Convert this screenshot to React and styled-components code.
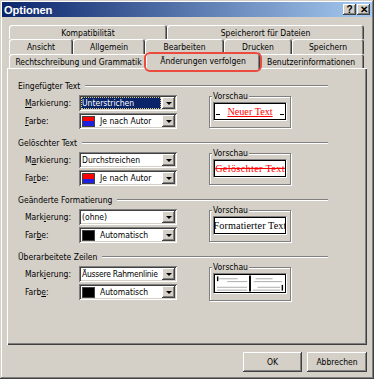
import React from "react";
import styled, { createGlobalStyle } from "styled-components";

const GlobalStyle = createGlobalStyle`
  html, body {
    margin: 0;
    padding: 0;
    background: #d4d0c8;
  }
  * {
    box-sizing: border-box;
  }
`;

const UI_FONT = `"DejaVu Sans Condensed", "Liberation Sans", Arial, sans-serif`;
const SERIF = `"Liberation Serif", "Times New Roman", serif`;

const Window = styled.div`
  width: 374px;
  height: 379px;
  padding: 2px;
  background: #d4d0c8;
  display: flex;
  flex-direction: column;
  font-family: ${UI_FONT};
  font-size: 8.5px;
  color: #000;
  box-shadow: inset -1px -1px #404040, inset 1px 1px #d4d0c8,
    inset -2px -2px #808080, inset 2px 2px #fff;
`;

const TitleBar = styled.div`
  height: 15px;
  display: flex;
  align-items: center;
  background: linear-gradient(to right, #0a246a, #a6caf0);
  padding: 0 2px 0 2px;
`;

const TitleText = styled.div`
  flex: 1;
  color: #fff;
  font-family: "Liberation Sans", Arial, sans-serif;
  font-weight: bold;
  font-size: 11.2px;
  letter-spacing: -0.1px;
`;

const TitleButton = styled.div`
  width: 13px;
  height: 11px;
  margin-left: 1px;
  background: #d4d0c8;
  display: flex;
  align-items: center;
  justify-content: center;
  font-family: "Liberation Sans", Arial, sans-serif;
  font-weight: bold;
  font-size: 10px;
  line-height: 1;
  box-shadow: inset -1px -1px #404040, inset 1px 1px #fff,
    inset -2px -2px #808080;
`;

const Content = styled.div`
  display: flex;
  flex-direction: column;
  padding: 8px 3px 0 5px;
`;

const TabRow = styled.div`
  display: flex;
  padding-left: 2px;
  height: ${(p) => p.h}px;
`;

const Tab = styled.div`
  position: relative;
  width: ${(p) => p.w}px;
  display: flex;
  align-items: center;
  justify-content: center;
  padding-top: 1px;
  background: #d4d0c8;
  border-radius: 3px 3px 0 0;
  box-shadow: inset 1px 1px #fff, inset -1px 0 #404040, inset -2px 0 #808080;
  white-space: nowrap;
`;

const ActiveTab = styled(Tab)`
  width: ${(p) => p.w + 4}px;
  margin: -2px -2px -1px -2px;
  padding-top: 0;
  z-index: 2;
`;

const Highlight = styled.div`
  position: absolute;
  left: -2px;
  right: -2px;
  top: 0px;
  bottom: -3px;
  border: 2px solid #ec4a3e;
  border-radius: 6px;
`;

const Panel = styled.div`
  position: relative;
  z-index: 1;
  height: 277px;
  width: 360px;
  padding: 11px 0 0 11px;
  background: #d4d0c8;
  box-shadow: inset 1px 1px #fff, inset -1px -1px #404040,
    inset -2px -2px #808080;
`;

const Section = styled.div`
  width: 310px;
  height: 57px;
`;

const SectionHeader = styled.div`
  height: 14px;
  display: flex;
  align-items: center;
`;

const SectionLine = styled.div`
  flex: 1;
  margin-left: 5px;
  height: 2px;
  border-top: 1px solid #808080;
  border-bottom: 1px solid #fff;
`;

const SectionBody = styled.div`
  display: flex;
  margin-top: 2px;
  padding-left: 7px;
`;

const Fields = styled.div`
  display: flex;
  flex-direction: column;
  gap: 2px;
`;

const FieldRow = styled.div`
  display: flex;
  align-items: center;
  height: 16px;
`;

const FieldLabel = styled.div`
  width: 54px;
`;

const Key = styled.span`
  text-decoration: underline;
`;

const Combo = styled.div`
  width: 98px;
  height: 16px;
  padding: 2px;
  display: flex;
  background: #fff;
  box-shadow: inset 1px 1px #808080, inset -1px -1px #fff,
    inset 2px 2px #404040, inset -2px -2px #d4d0c8;
`;

const ComboValue = styled.div`
  flex: 1;
  display: flex;
  align-items: center;
  padding-left: 1px;
  margin-right: 1px;
  white-space: nowrap;
  overflow: hidden;
  letter-spacing: ${(p) => p.ls || 0}px;
  background: ${(p) => (p.selected ? "#0a246a" : "transparent")};
  color: ${(p) => (p.selected ? "#fff" : "#000")};
  outline: ${(p) => (p.selected ? "1px dotted #d8c878" : "none")};
  outline-offset: -1px;
`;

const Swatch = styled.div`
  width: 13px;
  height: 11px;
  flex: none;
  margin-right: 5px;
  border: 1px solid #404040;
  background: ${(p) => p.bg};
`;

const ArrowButton = styled.div`
  width: 13px;
  height: 12px;
  flex: none;
  display: flex;
  align-items: center;
  justify-content: center;
  background: #d4d0c8;
  box-shadow: inset -1px -1px #404040, inset 1px 1px #fff,
    inset -2px -2px #808080;
  &::after {
    content: "";
    border-left: 3px solid transparent;
    border-right: 3px solid transparent;
    border-top: 3px solid #000;
    margin-top: 1px;
  }
`;

const PreviewGroup = styled.div`
  position: relative;
  width: 82px;
  height: ${(p) => p.h}px;
  margin: 1px 0 0 32px;
  padding: 5px 3px 6px 3px;
  display: flex;
  border: 1px solid #808080;
  box-shadow: inset 1px 1px #fff, 1px 1px #fff;
`;

const GroupLabel = styled.div`
  position: absolute;
  left: 2px;
  top: -6px;
  padding: 0 1px;
  line-height: 10px;
  background: #d4d0c8;
`;

const PreviewBox = styled.div`
  flex: 1;
  display: flex;
  align-items: center;
  justify-content: center;
  background: #fff;
  border: 1px solid;
  border-color: #808080 #fff #fff #808080;
  box-shadow: inset 0 0 0 1px #000;
  padding: 0 2px;
  font-family: ${SERIF};
  font-size: 10.2px;
  white-space: nowrap;
  overflow: hidden;
`;

const Blank = styled.span`
  display: inline-block;
  width: 4px;
  height: 1px;
  background: #000;
  margin: 5px 0 0;
  align-self: center;
`;

const PreviewText = styled.span`
  flex: 1;
  text-align: center;
  color: ${(p) => p.color};
  text-decoration: ${(p) => p.deco};
  text-decoration-color: ${(p) => p.color};
  letter-spacing: ${(p) => p.ls || 0}px;
`;

const ButtonBar = styled.div`
  display: flex;
  justify-content: flex-end;
  gap: 5px;
  margin-top: 7px;
  padding-right: 2px;
`;

const Button = styled.div`
  width: ${(p) => p.w}px;
  height: 20px;
  display: flex;
  align-items: center;
  justify-content: center;
  background: #d4d0c8;
  box-shadow: inset -1px -1px #404040, inset 1px 1px #fff,
    inset -2px -2px #808080;
`;

const ColumnsPreview = () => (
  <svg width="72" height="17" viewBox="0 0 72 17">
    <rect x="35" y="0" width="2" height="17" fill="#000" />
    <rect x="1" y="1" width="1.5" height="5" fill="#000" />
    <g stroke="#a8a8a8" strokeWidth="1">
      <line x1="3" y1="3.5" x2="23" y2="3.5" />
      <line x1="12" y1="6.5" x2="33" y2="6.5" />
      <line x1="1" y1="12.5" x2="33" y2="12.5" />
      <line x1="1" y1="15.5" x2="33" y2="15.5" />
      <line x1="42" y1="3.5" x2="60" y2="3.5" />
      <line x1="40" y1="6.5" x2="70" y2="6.5" />
      <line x1="44" y1="12.5" x2="68" y2="12.5" />
      <line x1="39" y1="15.5" x2="68" y2="15.5" />
    </g>
    <rect x="69.5" y="10" width="1.5" height="6" fill="#000" />
  </svg>
);

const sections = [
  {
    title: "Eingefügter Text",
    mark: ["", "M", "arkierung:"],
    color: ["", "F", "arbe:"],
    markValue: "Unterstrichen",
    selected: true,
    swatch: "linear-gradient(#ff0000 50%, #2020e0 50%)",
    colorValue: "Je nach Autor",
    groupH: 32,
    preview: (
      <PreviewBox>
        <Blank />
        <PreviewText color="#ff0000" deco="underline">
          Neuer Text
        </PreviewText>
        <Blank />
      </PreviewBox>
    ),
  },
  {
    title: "Gelöschter Text",
    mark: ["M", "a", "rkierung:"],
    color: ["Fa", "r", "be:"],
    markValue: "Durchstreichen",
    swatch: "linear-gradient(#ff0000 50%, #2020e0 50%)",
    colorValue: "Je nach Autor",
    groupH: 32,
    preview: (
      <PreviewBox>
        <PreviewText color="#ff0000" deco="line-through" ls={0.35}>
          Gelöschter Text
        </PreviewText>
      </PreviewBox>
    ),
  },
  {
    title: "Geänderte Formatierung",
    mark: ["Mark", "i", "erung:"],
    color: ["Far", "b", "e:"],
    markValue: "(ohne)",
    swatch: "#000",
    colorValue: "Automatisch",
    groupH: 32,
    preview: (
      <PreviewBox>
        <PreviewText color="#000" deco="none" ls={0.1}>
          Formatierter Text
        </PreviewText>
      </PreviewBox>
    ),
  },
  {
    title: "Überarbeitete Zeilen",
    mark: ["Mark", "i", "erung:"],
    color: ["Farb", "e", ":"],
    markValue: "Äussere Rahmenlinie",
    markLs: -0.25,
    swatch: "#000",
    colorValue: "Automatisch",
    groupH: 34,
    preview: (
      <PreviewBox>
        <ColumnsPreview />
      </PreviewBox>
    ),
  },
];

const Label = ({ parts }) => (
  <FieldLabel>
    {parts[0]}
    <Key>{parts[1]}</Key>
    {parts[2]}
  </FieldLabel>
);

const App = () => {
  return (
    <>
      <GlobalStyle />
      <Window>
        <TitleBar>
          <TitleText>Optionen</TitleText>
          <TitleButton>?</TitleButton>
          <TitleButton>✕</TitleButton>
        </TitleBar>

        <Content>
          <TabRow h={14}>
            <Tab w={158}>Kompatibilität</Tab>
            <Tab w={197}>Speicherort für Dateien</Tab>
          </TabRow>
          <TabRow h={15}>
            <Tab w={64}>Ansicht</Tab>
            <Tab w={72}>Allgemein</Tab>
            <Tab w={79}>Bearbeiten</Tab>
            <Tab w={68}>Drucken</Tab>
            <Tab w={72}>Speichern</Tab>
          </TabRow>
          <TabRow h={14}>
            <Tab w={139}>Rechtschreibung und Grammatik</Tab>
            <ActiveTab w={110}>
              Änderungen verfolgen
              <Highlight />
            </ActiveTab>
            <Tab w={106}>Benutzerinformationen</Tab>
          </TabRow>

          <Panel>
            {sections.map((s) => (
              <Section key={s.title}>
                <SectionHeader>
                  {s.title}
                  <SectionLine />
                </SectionHeader>
                <SectionBody>
                  <Fields>
                    <FieldRow>
                      <Label parts={s.mark} />
                      <Combo>
                        <ComboValue selected={s.selected} ls={s.markLs}>
                          {s.markValue}
                        </ComboValue>
                        <ArrowButton />
                      </Combo>
                    </FieldRow>
                    <FieldRow>
                      <Label parts={s.color} />
                      <Combo>
                        <ComboValue>
                          <Swatch bg={s.swatch} />
                          {s.colorValue}
                        </ComboValue>
                        <ArrowButton />
                      </Combo>
                    </FieldRow>
                  </Fields>
                  <PreviewGroup h={s.groupH}>
                    <GroupLabel>Vorschau</GroupLabel>
                    {s.preview}
                  </PreviewGroup>
                </SectionBody>
              </Section>
            ))}
          </Panel>

          <ButtonBar>
            <Button w={59}>OK</Button>
            <Button w={60}>Abbrechen</Button>
          </ButtonBar>
        </Content>
      </Window>
    </>
  );
};

export default App;
